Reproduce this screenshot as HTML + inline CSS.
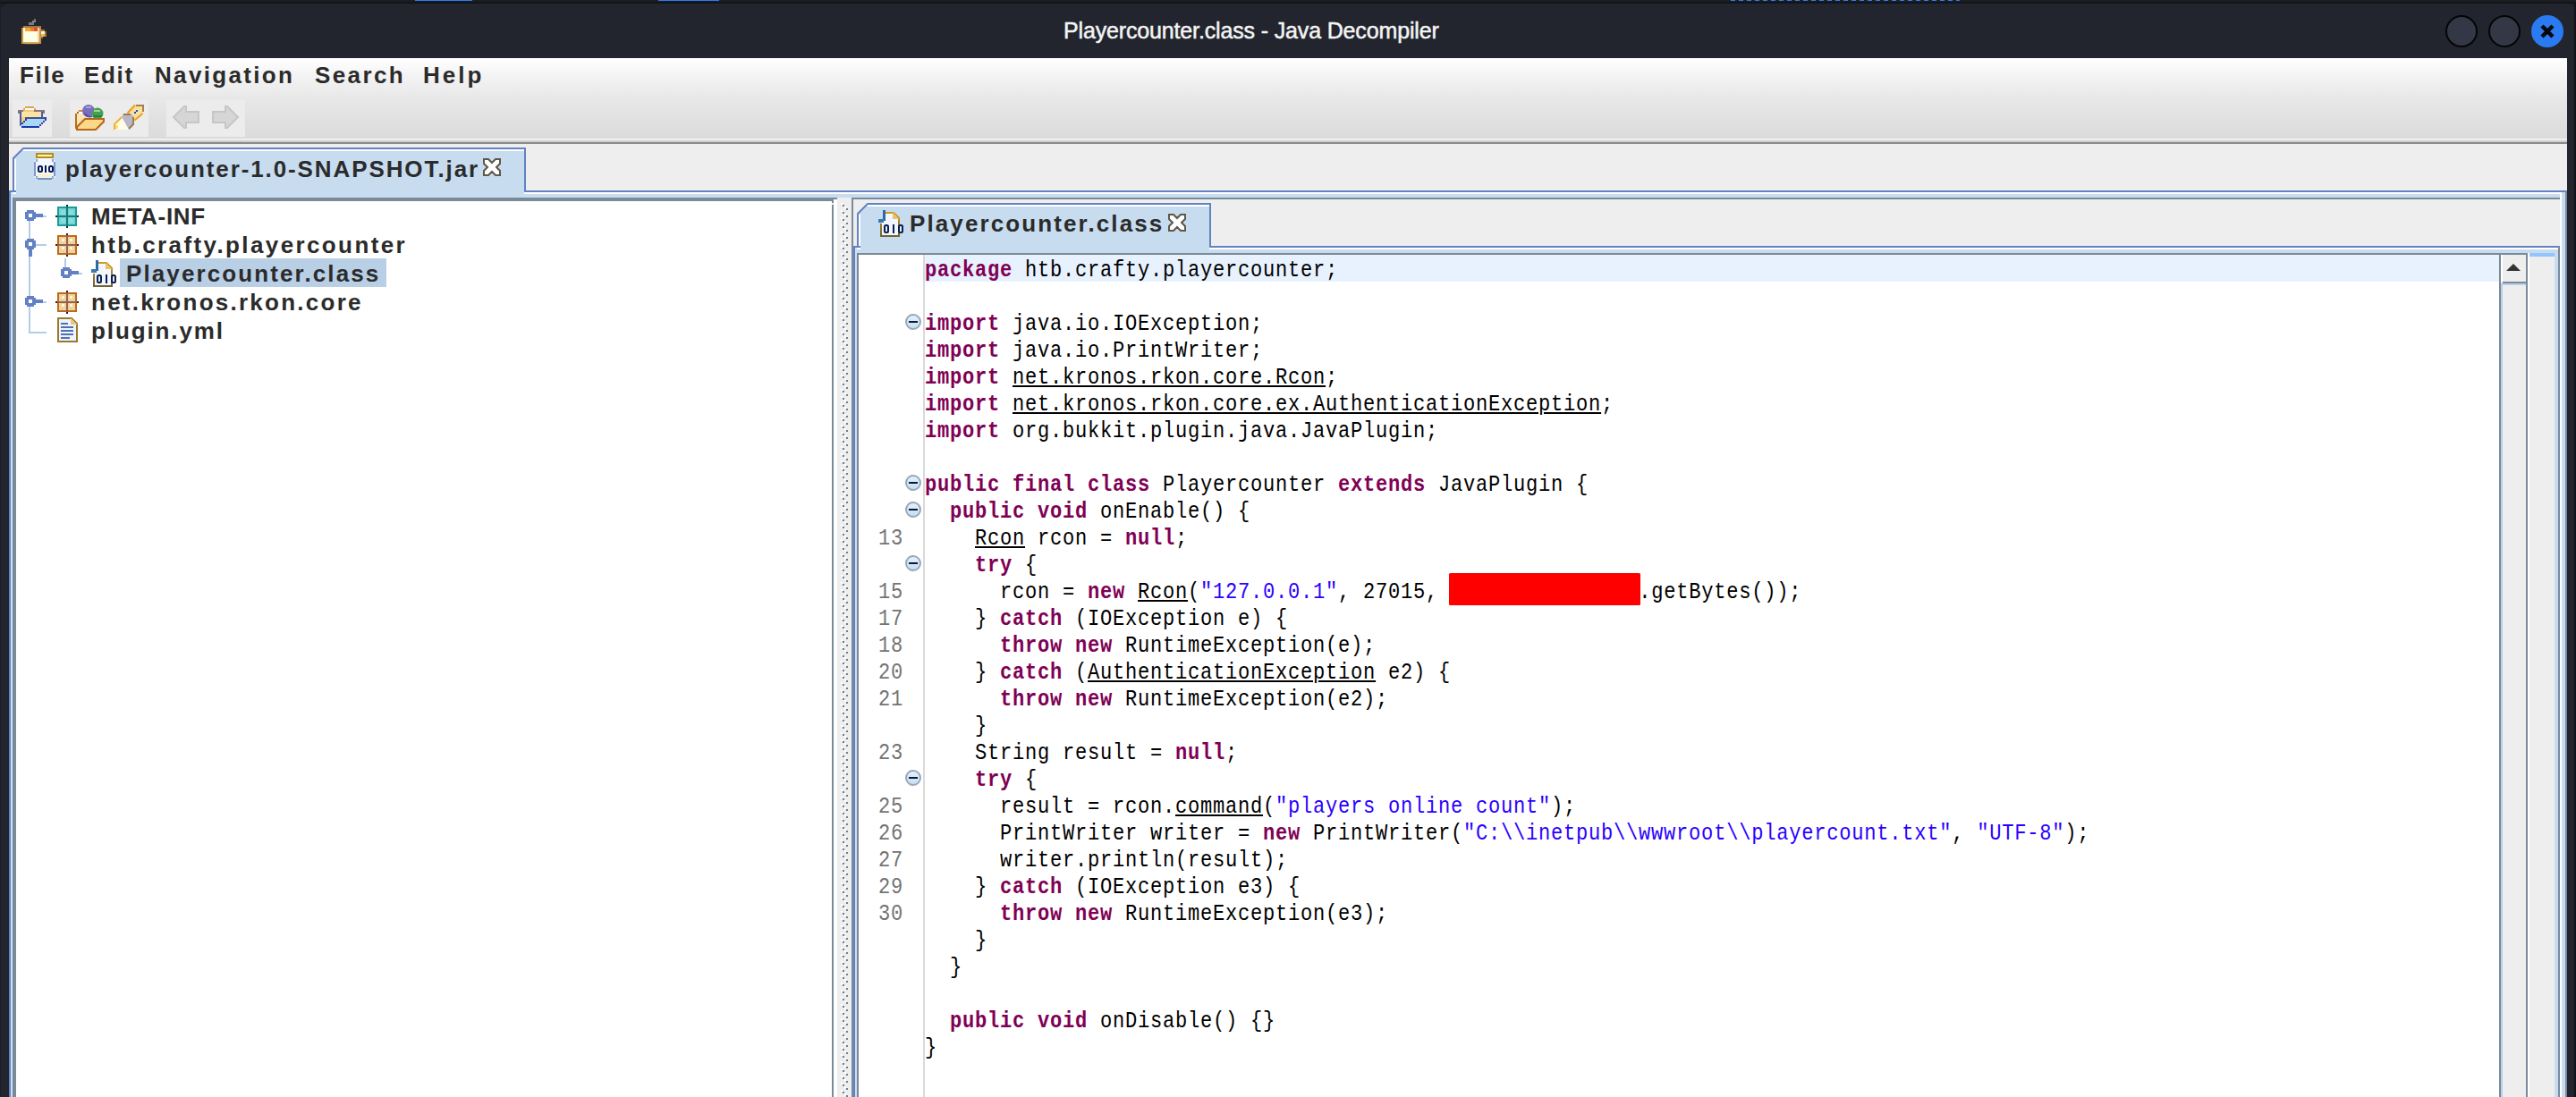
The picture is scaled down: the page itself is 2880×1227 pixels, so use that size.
<!DOCTYPE html>
<html><head><meta charset="utf-8">
<style>
*{margin:0;padding:0;box-sizing:border-box}
html,body{width:2880px;height:1227px;overflow:hidden;background:#1c1e24}
body{position:relative;font-family:"Liberation Sans",sans-serif}
.a{position:absolute}
#win{left:1px;top:4px;width:2879px;height:1223px;background:#22252e;border-radius:9px 9px 0 0}
#title{left:1189px;top:20px;font-size:25px;font-weight:normal;color:#f4f4f4;white-space:nowrap;letter-spacing:-0.15px;-webkit-text-stroke:0.5px #f4f4f4}
.wbtn{width:36px;height:36px;border-radius:50%;background:#343846;border:2px solid #050507;top:17px}
#menu{left:10px;top:65px;width:2860px;height:90px;background:linear-gradient(#ffffff 0px,#f3f3f3 20px,#e8e8e8 45px,#e0e0e0 70px,#dbdbdb 90px)}
.mi{top:69px;font-size:26px;font-weight:bold;color:#2b2b2b;white-space:nowrap}
.tb{top:112px;height:41px;background:#ececec}
#sep1{left:10px;top:155px;width:2860px;height:2px;background:#f0f0f0;border-bottom:0}
#sep1b{left:10px;top:157px;width:2860px;height:2px;background:#cecece}
#sep2{left:10px;top:159px;width:2860px;height:2px;background:#8a8a8a}
#body{left:10px;top:161px;width:2860px;height:1066px;background:#eeeeee}
.code{font-family:"Liberation Mono",monospace;font-size:26px;letter-spacing:0.87px;white-space:pre;color:#000;transform:scaleX(0.85);transform-origin:0 0}
.k{color:#7f0055;font-weight:bold}
.s{color:#2a00ff}
.u{text-decoration:underline;text-underline-offset:2px;text-decoration-thickness:2px}
.tree{font-size:26px;font-weight:bold;color:#2b2b2b;white-space:nowrap}
.code,.ln{line-height:30px}
.fold{width:18px;height:18px;border-radius:50%;background:linear-gradient(#e2f2fc,#c4e0f2);border:2px solid #9aa8bc;box-sizing:border-box}
.fold:after{content:"";position:absolute;left:2px;top:6px;width:10px;height:2px;background:#121630}
.ln{color:#747474;font-family:"Liberation Mono",monospace;font-size:26px;letter-spacing:0.87px;white-space:pre;text-align:right;transform:scaleX(0.85);transform-origin:100% 0}
</style></head><body>
<!-- top strip artifacts -->
<div class="a" style="left:0;top:2px;width:2880px;height:2px;background:#131418"></div>
<div class="a" style="left:464px;top:0;width:64px;height:1px;background:#2d7cf0"></div>
<div class="a" style="left:736px;top:0;width:68px;height:1px;background:#2d7cf0"></div>
<div class="a" style="left:1935px;top:0;width:256px;height:1px;background:repeating-linear-gradient(90deg,#2d7cf0 0 5px,transparent 5px 9px)"></div>
<div id="win" class="a"></div>
<div class="a" style="left:2878px;top:4px;width:2px;height:1223px;background:#111317"></div>
<div id="title" class="a">Playercounter.class - Java Decompiler</div>
<div class="a wbtn" style="left:2734px"></div>
<div class="a wbtn" style="left:2782px"></div>
<div class="a wbtn" style="left:2830px;background:#2a7bf2;border-color:#2a7bf2"></div>

<div id="menu" class="a"></div>
<div class="a mi" style="left:22px;letter-spacing:1.67px">File</div>
<div class="a mi" style="left:94px;letter-spacing:1.67px">Edit</div>
<div class="a mi" style="left:173px;letter-spacing:2.33px">Navigation</div>
<div class="a mi" style="left:352px;letter-spacing:2.4px">Search</div>
<div class="a mi" style="left:473px;letter-spacing:3.0px">Help</div>
<div class="a tb" style="left:14px;width:44px"></div>
<div class="a tb" style="left:78px;width:88px"></div>
<div class="a tb" style="left:186px;width:88px"></div>
<div id="sep1" class="a"></div>
<div id="sep1b" class="a"></div>
<div id="sep2" class="a"></div>
<div id="body" class="a"></div>

<svg class="a" style="left:0;top:0" width="2880" height="1227" shape-rendering="crispEdges">
 <!-- outer tab -->
 <polygon points="16,177 26,167 586,167 586,217 16,217" fill="#c8dcf0"/>
 <path d="M15,213 V177 L26,166 H587 V213" fill="none" stroke="#6282c2" stroke-width="2" shape-rendering="auto"/>
 <rect x="26" y="167" width="560" height="2" fill="#ffffff"/>
 <rect x="16" y="178" width="2" height="35" fill="#ffffff"/>
 <!-- outer frame -->
 <rect x="10" y="213" width="8" height="2" fill="#6282c2"/>
 <rect x="586" y="213" width="2284" height="2" fill="#6282c2"/>
 <rect x="12" y="215" width="6" height="2" fill="#ffffff"/>
 <rect x="586" y="215" width="2278" height="2" fill="#ffffff"/>
 <rect x="12" y="217" width="2856" height="4" fill="#c8dcf0"/>
 <rect x="10" y="213" width="2" height="1014" fill="#6282c2"/>
 <rect x="12" y="215" width="2" height="1012" fill="#cce0f6"/>
 <rect x="2862" y="215" width="2" height="1012" fill="#ffffff"/>
 <rect x="2864" y="215" width="4" height="1012" fill="#c8dcf0"/>
 <rect x="2868" y="213" width="2" height="1014" fill="#7a8a99"/>
 <!-- tree pane -->
 <rect x="14" y="221" width="916" height="4" fill="#7a8a99"/><rect x="930" y="221" width="6" height="2" fill="#7a8a99"/><rect x="932" y="223" width="4" height="2" fill="#ffffff"/><rect x="930" y="223" width="2" height="4" fill="#7a8a99"/>
 <rect x="14" y="221" width="4" height="1006" fill="#7a8a99"/>
 <rect x="18" y="225" width="912" height="1002" fill="#ffffff"/>
 <rect x="930" y="229" width="2" height="998" fill="#7a8a99"/>
 <rect x="932" y="225" width="4" height="1002" fill="#ffffff"/>
 <!-- splitter -->
 <rect x="936" y="221" width="16" height="1006" fill="#eeeeee"/>
 <rect x="942" y="229" width="2" height="2" fill="#6e7f8f"/><rect x="940" y="227" width="2" height="2" fill="#ffffff"/><rect x="946" y="233" width="2" height="2" fill="#6e7f8f"/><rect x="944" y="231" width="2" height="2" fill="#ffffff"/><rect x="942" y="237" width="2" height="2" fill="#6e7f8f"/><rect x="940" y="235" width="2" height="2" fill="#ffffff"/><rect x="946" y="241" width="2" height="2" fill="#6e7f8f"/><rect x="944" y="239" width="2" height="2" fill="#ffffff"/><rect x="942" y="245" width="2" height="2" fill="#6e7f8f"/><rect x="940" y="243" width="2" height="2" fill="#ffffff"/><rect x="946" y="249" width="2" height="2" fill="#6e7f8f"/><rect x="944" y="247" width="2" height="2" fill="#ffffff"/><rect x="942" y="253" width="2" height="2" fill="#6e7f8f"/><rect x="940" y="251" width="2" height="2" fill="#ffffff"/><rect x="946" y="257" width="2" height="2" fill="#6e7f8f"/><rect x="944" y="255" width="2" height="2" fill="#ffffff"/><rect x="942" y="261" width="2" height="2" fill="#6e7f8f"/><rect x="940" y="259" width="2" height="2" fill="#ffffff"/><rect x="946" y="265" width="2" height="2" fill="#6e7f8f"/><rect x="944" y="263" width="2" height="2" fill="#ffffff"/><rect x="942" y="269" width="2" height="2" fill="#6e7f8f"/><rect x="940" y="267" width="2" height="2" fill="#ffffff"/><rect x="946" y="273" width="2" height="2" fill="#6e7f8f"/><rect x="944" y="271" width="2" height="2" fill="#ffffff"/><rect x="942" y="277" width="2" height="2" fill="#6e7f8f"/><rect x="940" y="275" width="2" height="2" fill="#ffffff"/><rect x="946" y="281" width="2" height="2" fill="#6e7f8f"/><rect x="944" y="279" width="2" height="2" fill="#ffffff"/><rect x="942" y="285" width="2" height="2" fill="#6e7f8f"/><rect x="940" y="283" width="2" height="2" fill="#ffffff"/><rect x="946" y="289" width="2" height="2" fill="#6e7f8f"/><rect x="944" y="287" width="2" height="2" fill="#ffffff"/><rect x="942" y="293" width="2" height="2" fill="#6e7f8f"/><rect x="940" y="291" width="2" height="2" fill="#ffffff"/><rect x="946" y="297" width="2" height="2" fill="#6e7f8f"/><rect x="944" y="295" width="2" height="2" fill="#ffffff"/><rect x="942" y="301" width="2" height="2" fill="#6e7f8f"/><rect x="940" y="299" width="2" height="2" fill="#ffffff"/><rect x="946" y="305" width="2" height="2" fill="#6e7f8f"/><rect x="944" y="303" width="2" height="2" fill="#ffffff"/><rect x="942" y="309" width="2" height="2" fill="#6e7f8f"/><rect x="940" y="307" width="2" height="2" fill="#ffffff"/><rect x="946" y="313" width="2" height="2" fill="#6e7f8f"/><rect x="944" y="311" width="2" height="2" fill="#ffffff"/><rect x="942" y="317" width="2" height="2" fill="#6e7f8f"/><rect x="940" y="315" width="2" height="2" fill="#ffffff"/><rect x="946" y="321" width="2" height="2" fill="#6e7f8f"/><rect x="944" y="319" width="2" height="2" fill="#ffffff"/><rect x="942" y="325" width="2" height="2" fill="#6e7f8f"/><rect x="940" y="323" width="2" height="2" fill="#ffffff"/><rect x="946" y="329" width="2" height="2" fill="#6e7f8f"/><rect x="944" y="327" width="2" height="2" fill="#ffffff"/><rect x="942" y="333" width="2" height="2" fill="#6e7f8f"/><rect x="940" y="331" width="2" height="2" fill="#ffffff"/><rect x="946" y="337" width="2" height="2" fill="#6e7f8f"/><rect x="944" y="335" width="2" height="2" fill="#ffffff"/><rect x="942" y="341" width="2" height="2" fill="#6e7f8f"/><rect x="940" y="339" width="2" height="2" fill="#ffffff"/><rect x="946" y="345" width="2" height="2" fill="#6e7f8f"/><rect x="944" y="343" width="2" height="2" fill="#ffffff"/><rect x="942" y="349" width="2" height="2" fill="#6e7f8f"/><rect x="940" y="347" width="2" height="2" fill="#ffffff"/><rect x="946" y="353" width="2" height="2" fill="#6e7f8f"/><rect x="944" y="351" width="2" height="2" fill="#ffffff"/><rect x="942" y="357" width="2" height="2" fill="#6e7f8f"/><rect x="940" y="355" width="2" height="2" fill="#ffffff"/><rect x="946" y="361" width="2" height="2" fill="#6e7f8f"/><rect x="944" y="359" width="2" height="2" fill="#ffffff"/><rect x="942" y="365" width="2" height="2" fill="#6e7f8f"/><rect x="940" y="363" width="2" height="2" fill="#ffffff"/><rect x="946" y="369" width="2" height="2" fill="#6e7f8f"/><rect x="944" y="367" width="2" height="2" fill="#ffffff"/><rect x="942" y="373" width="2" height="2" fill="#6e7f8f"/><rect x="940" y="371" width="2" height="2" fill="#ffffff"/><rect x="946" y="377" width="2" height="2" fill="#6e7f8f"/><rect x="944" y="375" width="2" height="2" fill="#ffffff"/><rect x="942" y="381" width="2" height="2" fill="#6e7f8f"/><rect x="940" y="379" width="2" height="2" fill="#ffffff"/><rect x="946" y="385" width="2" height="2" fill="#6e7f8f"/><rect x="944" y="383" width="2" height="2" fill="#ffffff"/><rect x="942" y="389" width="2" height="2" fill="#6e7f8f"/><rect x="940" y="387" width="2" height="2" fill="#ffffff"/><rect x="946" y="393" width="2" height="2" fill="#6e7f8f"/><rect x="944" y="391" width="2" height="2" fill="#ffffff"/><rect x="942" y="397" width="2" height="2" fill="#6e7f8f"/><rect x="940" y="395" width="2" height="2" fill="#ffffff"/><rect x="946" y="401" width="2" height="2" fill="#6e7f8f"/><rect x="944" y="399" width="2" height="2" fill="#ffffff"/><rect x="942" y="405" width="2" height="2" fill="#6e7f8f"/><rect x="940" y="403" width="2" height="2" fill="#ffffff"/><rect x="946" y="409" width="2" height="2" fill="#6e7f8f"/><rect x="944" y="407" width="2" height="2" fill="#ffffff"/><rect x="942" y="413" width="2" height="2" fill="#6e7f8f"/><rect x="940" y="411" width="2" height="2" fill="#ffffff"/><rect x="946" y="417" width="2" height="2" fill="#6e7f8f"/><rect x="944" y="415" width="2" height="2" fill="#ffffff"/><rect x="942" y="421" width="2" height="2" fill="#6e7f8f"/><rect x="940" y="419" width="2" height="2" fill="#ffffff"/><rect x="946" y="425" width="2" height="2" fill="#6e7f8f"/><rect x="944" y="423" width="2" height="2" fill="#ffffff"/><rect x="942" y="429" width="2" height="2" fill="#6e7f8f"/><rect x="940" y="427" width="2" height="2" fill="#ffffff"/><rect x="946" y="433" width="2" height="2" fill="#6e7f8f"/><rect x="944" y="431" width="2" height="2" fill="#ffffff"/><rect x="942" y="437" width="2" height="2" fill="#6e7f8f"/><rect x="940" y="435" width="2" height="2" fill="#ffffff"/><rect x="946" y="441" width="2" height="2" fill="#6e7f8f"/><rect x="944" y="439" width="2" height="2" fill="#ffffff"/><rect x="942" y="445" width="2" height="2" fill="#6e7f8f"/><rect x="940" y="443" width="2" height="2" fill="#ffffff"/><rect x="946" y="449" width="2" height="2" fill="#6e7f8f"/><rect x="944" y="447" width="2" height="2" fill="#ffffff"/><rect x="942" y="453" width="2" height="2" fill="#6e7f8f"/><rect x="940" y="451" width="2" height="2" fill="#ffffff"/><rect x="946" y="457" width="2" height="2" fill="#6e7f8f"/><rect x="944" y="455" width="2" height="2" fill="#ffffff"/><rect x="942" y="461" width="2" height="2" fill="#6e7f8f"/><rect x="940" y="459" width="2" height="2" fill="#ffffff"/><rect x="946" y="465" width="2" height="2" fill="#6e7f8f"/><rect x="944" y="463" width="2" height="2" fill="#ffffff"/><rect x="942" y="469" width="2" height="2" fill="#6e7f8f"/><rect x="940" y="467" width="2" height="2" fill="#ffffff"/><rect x="946" y="473" width="2" height="2" fill="#6e7f8f"/><rect x="944" y="471" width="2" height="2" fill="#ffffff"/><rect x="942" y="477" width="2" height="2" fill="#6e7f8f"/><rect x="940" y="475" width="2" height="2" fill="#ffffff"/><rect x="946" y="481" width="2" height="2" fill="#6e7f8f"/><rect x="944" y="479" width="2" height="2" fill="#ffffff"/><rect x="942" y="485" width="2" height="2" fill="#6e7f8f"/><rect x="940" y="483" width="2" height="2" fill="#ffffff"/><rect x="946" y="489" width="2" height="2" fill="#6e7f8f"/><rect x="944" y="487" width="2" height="2" fill="#ffffff"/><rect x="942" y="493" width="2" height="2" fill="#6e7f8f"/><rect x="940" y="491" width="2" height="2" fill="#ffffff"/><rect x="946" y="497" width="2" height="2" fill="#6e7f8f"/><rect x="944" y="495" width="2" height="2" fill="#ffffff"/><rect x="942" y="501" width="2" height="2" fill="#6e7f8f"/><rect x="940" y="499" width="2" height="2" fill="#ffffff"/><rect x="946" y="505" width="2" height="2" fill="#6e7f8f"/><rect x="944" y="503" width="2" height="2" fill="#ffffff"/><rect x="942" y="509" width="2" height="2" fill="#6e7f8f"/><rect x="940" y="507" width="2" height="2" fill="#ffffff"/><rect x="946" y="513" width="2" height="2" fill="#6e7f8f"/><rect x="944" y="511" width="2" height="2" fill="#ffffff"/><rect x="942" y="517" width="2" height="2" fill="#6e7f8f"/><rect x="940" y="515" width="2" height="2" fill="#ffffff"/><rect x="946" y="521" width="2" height="2" fill="#6e7f8f"/><rect x="944" y="519" width="2" height="2" fill="#ffffff"/><rect x="942" y="525" width="2" height="2" fill="#6e7f8f"/><rect x="940" y="523" width="2" height="2" fill="#ffffff"/><rect x="946" y="529" width="2" height="2" fill="#6e7f8f"/><rect x="944" y="527" width="2" height="2" fill="#ffffff"/><rect x="942" y="533" width="2" height="2" fill="#6e7f8f"/><rect x="940" y="531" width="2" height="2" fill="#ffffff"/><rect x="946" y="537" width="2" height="2" fill="#6e7f8f"/><rect x="944" y="535" width="2" height="2" fill="#ffffff"/><rect x="942" y="541" width="2" height="2" fill="#6e7f8f"/><rect x="940" y="539" width="2" height="2" fill="#ffffff"/><rect x="946" y="545" width="2" height="2" fill="#6e7f8f"/><rect x="944" y="543" width="2" height="2" fill="#ffffff"/><rect x="942" y="549" width="2" height="2" fill="#6e7f8f"/><rect x="940" y="547" width="2" height="2" fill="#ffffff"/><rect x="946" y="553" width="2" height="2" fill="#6e7f8f"/><rect x="944" y="551" width="2" height="2" fill="#ffffff"/><rect x="942" y="557" width="2" height="2" fill="#6e7f8f"/><rect x="940" y="555" width="2" height="2" fill="#ffffff"/><rect x="946" y="561" width="2" height="2" fill="#6e7f8f"/><rect x="944" y="559" width="2" height="2" fill="#ffffff"/><rect x="942" y="565" width="2" height="2" fill="#6e7f8f"/><rect x="940" y="563" width="2" height="2" fill="#ffffff"/><rect x="946" y="569" width="2" height="2" fill="#6e7f8f"/><rect x="944" y="567" width="2" height="2" fill="#ffffff"/><rect x="942" y="573" width="2" height="2" fill="#6e7f8f"/><rect x="940" y="571" width="2" height="2" fill="#ffffff"/><rect x="946" y="577" width="2" height="2" fill="#6e7f8f"/><rect x="944" y="575" width="2" height="2" fill="#ffffff"/><rect x="942" y="581" width="2" height="2" fill="#6e7f8f"/><rect x="940" y="579" width="2" height="2" fill="#ffffff"/><rect x="946" y="585" width="2" height="2" fill="#6e7f8f"/><rect x="944" y="583" width="2" height="2" fill="#ffffff"/><rect x="942" y="589" width="2" height="2" fill="#6e7f8f"/><rect x="940" y="587" width="2" height="2" fill="#ffffff"/><rect x="946" y="593" width="2" height="2" fill="#6e7f8f"/><rect x="944" y="591" width="2" height="2" fill="#ffffff"/><rect x="942" y="597" width="2" height="2" fill="#6e7f8f"/><rect x="940" y="595" width="2" height="2" fill="#ffffff"/><rect x="946" y="601" width="2" height="2" fill="#6e7f8f"/><rect x="944" y="599" width="2" height="2" fill="#ffffff"/><rect x="942" y="605" width="2" height="2" fill="#6e7f8f"/><rect x="940" y="603" width="2" height="2" fill="#ffffff"/><rect x="946" y="609" width="2" height="2" fill="#6e7f8f"/><rect x="944" y="607" width="2" height="2" fill="#ffffff"/><rect x="942" y="613" width="2" height="2" fill="#6e7f8f"/><rect x="940" y="611" width="2" height="2" fill="#ffffff"/><rect x="946" y="617" width="2" height="2" fill="#6e7f8f"/><rect x="944" y="615" width="2" height="2" fill="#ffffff"/><rect x="942" y="621" width="2" height="2" fill="#6e7f8f"/><rect x="940" y="619" width="2" height="2" fill="#ffffff"/><rect x="946" y="625" width="2" height="2" fill="#6e7f8f"/><rect x="944" y="623" width="2" height="2" fill="#ffffff"/><rect x="942" y="629" width="2" height="2" fill="#6e7f8f"/><rect x="940" y="627" width="2" height="2" fill="#ffffff"/><rect x="946" y="633" width="2" height="2" fill="#6e7f8f"/><rect x="944" y="631" width="2" height="2" fill="#ffffff"/><rect x="942" y="637" width="2" height="2" fill="#6e7f8f"/><rect x="940" y="635" width="2" height="2" fill="#ffffff"/><rect x="946" y="641" width="2" height="2" fill="#6e7f8f"/><rect x="944" y="639" width="2" height="2" fill="#ffffff"/><rect x="942" y="645" width="2" height="2" fill="#6e7f8f"/><rect x="940" y="643" width="2" height="2" fill="#ffffff"/><rect x="946" y="649" width="2" height="2" fill="#6e7f8f"/><rect x="944" y="647" width="2" height="2" fill="#ffffff"/><rect x="942" y="653" width="2" height="2" fill="#6e7f8f"/><rect x="940" y="651" width="2" height="2" fill="#ffffff"/><rect x="946" y="657" width="2" height="2" fill="#6e7f8f"/><rect x="944" y="655" width="2" height="2" fill="#ffffff"/><rect x="942" y="661" width="2" height="2" fill="#6e7f8f"/><rect x="940" y="659" width="2" height="2" fill="#ffffff"/><rect x="946" y="665" width="2" height="2" fill="#6e7f8f"/><rect x="944" y="663" width="2" height="2" fill="#ffffff"/><rect x="942" y="669" width="2" height="2" fill="#6e7f8f"/><rect x="940" y="667" width="2" height="2" fill="#ffffff"/><rect x="946" y="673" width="2" height="2" fill="#6e7f8f"/><rect x="944" y="671" width="2" height="2" fill="#ffffff"/><rect x="942" y="677" width="2" height="2" fill="#6e7f8f"/><rect x="940" y="675" width="2" height="2" fill="#ffffff"/><rect x="946" y="681" width="2" height="2" fill="#6e7f8f"/><rect x="944" y="679" width="2" height="2" fill="#ffffff"/><rect x="942" y="685" width="2" height="2" fill="#6e7f8f"/><rect x="940" y="683" width="2" height="2" fill="#ffffff"/><rect x="946" y="689" width="2" height="2" fill="#6e7f8f"/><rect x="944" y="687" width="2" height="2" fill="#ffffff"/><rect x="942" y="693" width="2" height="2" fill="#6e7f8f"/><rect x="940" y="691" width="2" height="2" fill="#ffffff"/><rect x="946" y="697" width="2" height="2" fill="#6e7f8f"/><rect x="944" y="695" width="2" height="2" fill="#ffffff"/><rect x="942" y="701" width="2" height="2" fill="#6e7f8f"/><rect x="940" y="699" width="2" height="2" fill="#ffffff"/><rect x="946" y="705" width="2" height="2" fill="#6e7f8f"/><rect x="944" y="703" width="2" height="2" fill="#ffffff"/><rect x="942" y="709" width="2" height="2" fill="#6e7f8f"/><rect x="940" y="707" width="2" height="2" fill="#ffffff"/><rect x="946" y="713" width="2" height="2" fill="#6e7f8f"/><rect x="944" y="711" width="2" height="2" fill="#ffffff"/><rect x="942" y="717" width="2" height="2" fill="#6e7f8f"/><rect x="940" y="715" width="2" height="2" fill="#ffffff"/><rect x="946" y="721" width="2" height="2" fill="#6e7f8f"/><rect x="944" y="719" width="2" height="2" fill="#ffffff"/><rect x="942" y="725" width="2" height="2" fill="#6e7f8f"/><rect x="940" y="723" width="2" height="2" fill="#ffffff"/><rect x="946" y="729" width="2" height="2" fill="#6e7f8f"/><rect x="944" y="727" width="2" height="2" fill="#ffffff"/><rect x="942" y="733" width="2" height="2" fill="#6e7f8f"/><rect x="940" y="731" width="2" height="2" fill="#ffffff"/><rect x="946" y="737" width="2" height="2" fill="#6e7f8f"/><rect x="944" y="735" width="2" height="2" fill="#ffffff"/><rect x="942" y="741" width="2" height="2" fill="#6e7f8f"/><rect x="940" y="739" width="2" height="2" fill="#ffffff"/><rect x="946" y="745" width="2" height="2" fill="#6e7f8f"/><rect x="944" y="743" width="2" height="2" fill="#ffffff"/><rect x="942" y="749" width="2" height="2" fill="#6e7f8f"/><rect x="940" y="747" width="2" height="2" fill="#ffffff"/><rect x="946" y="753" width="2" height="2" fill="#6e7f8f"/><rect x="944" y="751" width="2" height="2" fill="#ffffff"/><rect x="942" y="757" width="2" height="2" fill="#6e7f8f"/><rect x="940" y="755" width="2" height="2" fill="#ffffff"/><rect x="946" y="761" width="2" height="2" fill="#6e7f8f"/><rect x="944" y="759" width="2" height="2" fill="#ffffff"/><rect x="942" y="765" width="2" height="2" fill="#6e7f8f"/><rect x="940" y="763" width="2" height="2" fill="#ffffff"/><rect x="946" y="769" width="2" height="2" fill="#6e7f8f"/><rect x="944" y="767" width="2" height="2" fill="#ffffff"/><rect x="942" y="773" width="2" height="2" fill="#6e7f8f"/><rect x="940" y="771" width="2" height="2" fill="#ffffff"/><rect x="946" y="777" width="2" height="2" fill="#6e7f8f"/><rect x="944" y="775" width="2" height="2" fill="#ffffff"/><rect x="942" y="781" width="2" height="2" fill="#6e7f8f"/><rect x="940" y="779" width="2" height="2" fill="#ffffff"/><rect x="946" y="785" width="2" height="2" fill="#6e7f8f"/><rect x="944" y="783" width="2" height="2" fill="#ffffff"/><rect x="942" y="789" width="2" height="2" fill="#6e7f8f"/><rect x="940" y="787" width="2" height="2" fill="#ffffff"/><rect x="946" y="793" width="2" height="2" fill="#6e7f8f"/><rect x="944" y="791" width="2" height="2" fill="#ffffff"/><rect x="942" y="797" width="2" height="2" fill="#6e7f8f"/><rect x="940" y="795" width="2" height="2" fill="#ffffff"/><rect x="946" y="801" width="2" height="2" fill="#6e7f8f"/><rect x="944" y="799" width="2" height="2" fill="#ffffff"/><rect x="942" y="805" width="2" height="2" fill="#6e7f8f"/><rect x="940" y="803" width="2" height="2" fill="#ffffff"/><rect x="946" y="809" width="2" height="2" fill="#6e7f8f"/><rect x="944" y="807" width="2" height="2" fill="#ffffff"/><rect x="942" y="813" width="2" height="2" fill="#6e7f8f"/><rect x="940" y="811" width="2" height="2" fill="#ffffff"/><rect x="946" y="817" width="2" height="2" fill="#6e7f8f"/><rect x="944" y="815" width="2" height="2" fill="#ffffff"/><rect x="942" y="821" width="2" height="2" fill="#6e7f8f"/><rect x="940" y="819" width="2" height="2" fill="#ffffff"/><rect x="946" y="825" width="2" height="2" fill="#6e7f8f"/><rect x="944" y="823" width="2" height="2" fill="#ffffff"/><rect x="942" y="829" width="2" height="2" fill="#6e7f8f"/><rect x="940" y="827" width="2" height="2" fill="#ffffff"/><rect x="946" y="833" width="2" height="2" fill="#6e7f8f"/><rect x="944" y="831" width="2" height="2" fill="#ffffff"/><rect x="942" y="837" width="2" height="2" fill="#6e7f8f"/><rect x="940" y="835" width="2" height="2" fill="#ffffff"/><rect x="946" y="841" width="2" height="2" fill="#6e7f8f"/><rect x="944" y="839" width="2" height="2" fill="#ffffff"/><rect x="942" y="845" width="2" height="2" fill="#6e7f8f"/><rect x="940" y="843" width="2" height="2" fill="#ffffff"/><rect x="946" y="849" width="2" height="2" fill="#6e7f8f"/><rect x="944" y="847" width="2" height="2" fill="#ffffff"/><rect x="942" y="853" width="2" height="2" fill="#6e7f8f"/><rect x="940" y="851" width="2" height="2" fill="#ffffff"/><rect x="946" y="857" width="2" height="2" fill="#6e7f8f"/><rect x="944" y="855" width="2" height="2" fill="#ffffff"/><rect x="942" y="861" width="2" height="2" fill="#6e7f8f"/><rect x="940" y="859" width="2" height="2" fill="#ffffff"/><rect x="946" y="865" width="2" height="2" fill="#6e7f8f"/><rect x="944" y="863" width="2" height="2" fill="#ffffff"/><rect x="942" y="869" width="2" height="2" fill="#6e7f8f"/><rect x="940" y="867" width="2" height="2" fill="#ffffff"/><rect x="946" y="873" width="2" height="2" fill="#6e7f8f"/><rect x="944" y="871" width="2" height="2" fill="#ffffff"/><rect x="942" y="877" width="2" height="2" fill="#6e7f8f"/><rect x="940" y="875" width="2" height="2" fill="#ffffff"/><rect x="946" y="881" width="2" height="2" fill="#6e7f8f"/><rect x="944" y="879" width="2" height="2" fill="#ffffff"/><rect x="942" y="885" width="2" height="2" fill="#6e7f8f"/><rect x="940" y="883" width="2" height="2" fill="#ffffff"/><rect x="946" y="889" width="2" height="2" fill="#6e7f8f"/><rect x="944" y="887" width="2" height="2" fill="#ffffff"/><rect x="942" y="893" width="2" height="2" fill="#6e7f8f"/><rect x="940" y="891" width="2" height="2" fill="#ffffff"/><rect x="946" y="897" width="2" height="2" fill="#6e7f8f"/><rect x="944" y="895" width="2" height="2" fill="#ffffff"/><rect x="942" y="901" width="2" height="2" fill="#6e7f8f"/><rect x="940" y="899" width="2" height="2" fill="#ffffff"/><rect x="946" y="905" width="2" height="2" fill="#6e7f8f"/><rect x="944" y="903" width="2" height="2" fill="#ffffff"/><rect x="942" y="909" width="2" height="2" fill="#6e7f8f"/><rect x="940" y="907" width="2" height="2" fill="#ffffff"/><rect x="946" y="913" width="2" height="2" fill="#6e7f8f"/><rect x="944" y="911" width="2" height="2" fill="#ffffff"/><rect x="942" y="917" width="2" height="2" fill="#6e7f8f"/><rect x="940" y="915" width="2" height="2" fill="#ffffff"/><rect x="946" y="921" width="2" height="2" fill="#6e7f8f"/><rect x="944" y="919" width="2" height="2" fill="#ffffff"/><rect x="942" y="925" width="2" height="2" fill="#6e7f8f"/><rect x="940" y="923" width="2" height="2" fill="#ffffff"/><rect x="946" y="929" width="2" height="2" fill="#6e7f8f"/><rect x="944" y="927" width="2" height="2" fill="#ffffff"/><rect x="942" y="933" width="2" height="2" fill="#6e7f8f"/><rect x="940" y="931" width="2" height="2" fill="#ffffff"/><rect x="946" y="937" width="2" height="2" fill="#6e7f8f"/><rect x="944" y="935" width="2" height="2" fill="#ffffff"/><rect x="942" y="941" width="2" height="2" fill="#6e7f8f"/><rect x="940" y="939" width="2" height="2" fill="#ffffff"/><rect x="946" y="945" width="2" height="2" fill="#6e7f8f"/><rect x="944" y="943" width="2" height="2" fill="#ffffff"/><rect x="942" y="949" width="2" height="2" fill="#6e7f8f"/><rect x="940" y="947" width="2" height="2" fill="#ffffff"/><rect x="946" y="953" width="2" height="2" fill="#6e7f8f"/><rect x="944" y="951" width="2" height="2" fill="#ffffff"/><rect x="942" y="957" width="2" height="2" fill="#6e7f8f"/><rect x="940" y="955" width="2" height="2" fill="#ffffff"/><rect x="946" y="961" width="2" height="2" fill="#6e7f8f"/><rect x="944" y="959" width="2" height="2" fill="#ffffff"/><rect x="942" y="965" width="2" height="2" fill="#6e7f8f"/><rect x="940" y="963" width="2" height="2" fill="#ffffff"/><rect x="946" y="969" width="2" height="2" fill="#6e7f8f"/><rect x="944" y="967" width="2" height="2" fill="#ffffff"/><rect x="942" y="973" width="2" height="2" fill="#6e7f8f"/><rect x="940" y="971" width="2" height="2" fill="#ffffff"/><rect x="946" y="977" width="2" height="2" fill="#6e7f8f"/><rect x="944" y="975" width="2" height="2" fill="#ffffff"/><rect x="942" y="981" width="2" height="2" fill="#6e7f8f"/><rect x="940" y="979" width="2" height="2" fill="#ffffff"/><rect x="946" y="985" width="2" height="2" fill="#6e7f8f"/><rect x="944" y="983" width="2" height="2" fill="#ffffff"/><rect x="942" y="989" width="2" height="2" fill="#6e7f8f"/><rect x="940" y="987" width="2" height="2" fill="#ffffff"/><rect x="946" y="993" width="2" height="2" fill="#6e7f8f"/><rect x="944" y="991" width="2" height="2" fill="#ffffff"/><rect x="942" y="997" width="2" height="2" fill="#6e7f8f"/><rect x="940" y="995" width="2" height="2" fill="#ffffff"/><rect x="946" y="1001" width="2" height="2" fill="#6e7f8f"/><rect x="944" y="999" width="2" height="2" fill="#ffffff"/><rect x="942" y="1005" width="2" height="2" fill="#6e7f8f"/><rect x="940" y="1003" width="2" height="2" fill="#ffffff"/><rect x="946" y="1009" width="2" height="2" fill="#6e7f8f"/><rect x="944" y="1007" width="2" height="2" fill="#ffffff"/><rect x="942" y="1013" width="2" height="2" fill="#6e7f8f"/><rect x="940" y="1011" width="2" height="2" fill="#ffffff"/><rect x="946" y="1017" width="2" height="2" fill="#6e7f8f"/><rect x="944" y="1015" width="2" height="2" fill="#ffffff"/><rect x="942" y="1021" width="2" height="2" fill="#6e7f8f"/><rect x="940" y="1019" width="2" height="2" fill="#ffffff"/><rect x="946" y="1025" width="2" height="2" fill="#6e7f8f"/><rect x="944" y="1023" width="2" height="2" fill="#ffffff"/><rect x="942" y="1029" width="2" height="2" fill="#6e7f8f"/><rect x="940" y="1027" width="2" height="2" fill="#ffffff"/><rect x="946" y="1033" width="2" height="2" fill="#6e7f8f"/><rect x="944" y="1031" width="2" height="2" fill="#ffffff"/><rect x="942" y="1037" width="2" height="2" fill="#6e7f8f"/><rect x="940" y="1035" width="2" height="2" fill="#ffffff"/><rect x="946" y="1041" width="2" height="2" fill="#6e7f8f"/><rect x="944" y="1039" width="2" height="2" fill="#ffffff"/><rect x="942" y="1045" width="2" height="2" fill="#6e7f8f"/><rect x="940" y="1043" width="2" height="2" fill="#ffffff"/><rect x="946" y="1049" width="2" height="2" fill="#6e7f8f"/><rect x="944" y="1047" width="2" height="2" fill="#ffffff"/><rect x="942" y="1053" width="2" height="2" fill="#6e7f8f"/><rect x="940" y="1051" width="2" height="2" fill="#ffffff"/><rect x="946" y="1057" width="2" height="2" fill="#6e7f8f"/><rect x="944" y="1055" width="2" height="2" fill="#ffffff"/><rect x="942" y="1061" width="2" height="2" fill="#6e7f8f"/><rect x="940" y="1059" width="2" height="2" fill="#ffffff"/><rect x="946" y="1065" width="2" height="2" fill="#6e7f8f"/><rect x="944" y="1063" width="2" height="2" fill="#ffffff"/><rect x="942" y="1069" width="2" height="2" fill="#6e7f8f"/><rect x="940" y="1067" width="2" height="2" fill="#ffffff"/><rect x="946" y="1073" width="2" height="2" fill="#6e7f8f"/><rect x="944" y="1071" width="2" height="2" fill="#ffffff"/><rect x="942" y="1077" width="2" height="2" fill="#6e7f8f"/><rect x="940" y="1075" width="2" height="2" fill="#ffffff"/><rect x="946" y="1081" width="2" height="2" fill="#6e7f8f"/><rect x="944" y="1079" width="2" height="2" fill="#ffffff"/><rect x="942" y="1085" width="2" height="2" fill="#6e7f8f"/><rect x="940" y="1083" width="2" height="2" fill="#ffffff"/><rect x="946" y="1089" width="2" height="2" fill="#6e7f8f"/><rect x="944" y="1087" width="2" height="2" fill="#ffffff"/><rect x="942" y="1093" width="2" height="2" fill="#6e7f8f"/><rect x="940" y="1091" width="2" height="2" fill="#ffffff"/><rect x="946" y="1097" width="2" height="2" fill="#6e7f8f"/><rect x="944" y="1095" width="2" height="2" fill="#ffffff"/><rect x="942" y="1101" width="2" height="2" fill="#6e7f8f"/><rect x="940" y="1099" width="2" height="2" fill="#ffffff"/><rect x="946" y="1105" width="2" height="2" fill="#6e7f8f"/><rect x="944" y="1103" width="2" height="2" fill="#ffffff"/><rect x="942" y="1109" width="2" height="2" fill="#6e7f8f"/><rect x="940" y="1107" width="2" height="2" fill="#ffffff"/><rect x="946" y="1113" width="2" height="2" fill="#6e7f8f"/><rect x="944" y="1111" width="2" height="2" fill="#ffffff"/><rect x="942" y="1117" width="2" height="2" fill="#6e7f8f"/><rect x="940" y="1115" width="2" height="2" fill="#ffffff"/><rect x="946" y="1121" width="2" height="2" fill="#6e7f8f"/><rect x="944" y="1119" width="2" height="2" fill="#ffffff"/><rect x="942" y="1125" width="2" height="2" fill="#6e7f8f"/><rect x="940" y="1123" width="2" height="2" fill="#ffffff"/><rect x="946" y="1129" width="2" height="2" fill="#6e7f8f"/><rect x="944" y="1127" width="2" height="2" fill="#ffffff"/><rect x="942" y="1133" width="2" height="2" fill="#6e7f8f"/><rect x="940" y="1131" width="2" height="2" fill="#ffffff"/><rect x="946" y="1137" width="2" height="2" fill="#6e7f8f"/><rect x="944" y="1135" width="2" height="2" fill="#ffffff"/><rect x="942" y="1141" width="2" height="2" fill="#6e7f8f"/><rect x="940" y="1139" width="2" height="2" fill="#ffffff"/><rect x="946" y="1145" width="2" height="2" fill="#6e7f8f"/><rect x="944" y="1143" width="2" height="2" fill="#ffffff"/><rect x="942" y="1149" width="2" height="2" fill="#6e7f8f"/><rect x="940" y="1147" width="2" height="2" fill="#ffffff"/><rect x="946" y="1153" width="2" height="2" fill="#6e7f8f"/><rect x="944" y="1151" width="2" height="2" fill="#ffffff"/><rect x="942" y="1157" width="2" height="2" fill="#6e7f8f"/><rect x="940" y="1155" width="2" height="2" fill="#ffffff"/><rect x="946" y="1161" width="2" height="2" fill="#6e7f8f"/><rect x="944" y="1159" width="2" height="2" fill="#ffffff"/><rect x="942" y="1165" width="2" height="2" fill="#6e7f8f"/><rect x="940" y="1163" width="2" height="2" fill="#ffffff"/><rect x="946" y="1169" width="2" height="2" fill="#6e7f8f"/><rect x="944" y="1167" width="2" height="2" fill="#ffffff"/><rect x="942" y="1173" width="2" height="2" fill="#6e7f8f"/><rect x="940" y="1171" width="2" height="2" fill="#ffffff"/><rect x="946" y="1177" width="2" height="2" fill="#6e7f8f"/><rect x="944" y="1175" width="2" height="2" fill="#ffffff"/><rect x="942" y="1181" width="2" height="2" fill="#6e7f8f"/><rect x="940" y="1179" width="2" height="2" fill="#ffffff"/><rect x="946" y="1185" width="2" height="2" fill="#6e7f8f"/><rect x="944" y="1183" width="2" height="2" fill="#ffffff"/><rect x="942" y="1189" width="2" height="2" fill="#6e7f8f"/><rect x="940" y="1187" width="2" height="2" fill="#ffffff"/><rect x="946" y="1193" width="2" height="2" fill="#6e7f8f"/><rect x="944" y="1191" width="2" height="2" fill="#ffffff"/><rect x="942" y="1197" width="2" height="2" fill="#6e7f8f"/><rect x="940" y="1195" width="2" height="2" fill="#ffffff"/><rect x="946" y="1201" width="2" height="2" fill="#6e7f8f"/><rect x="944" y="1199" width="2" height="2" fill="#ffffff"/><rect x="942" y="1205" width="2" height="2" fill="#6e7f8f"/><rect x="940" y="1203" width="2" height="2" fill="#ffffff"/><rect x="946" y="1209" width="2" height="2" fill="#6e7f8f"/><rect x="944" y="1207" width="2" height="2" fill="#ffffff"/><rect x="942" y="1213" width="2" height="2" fill="#6e7f8f"/><rect x="940" y="1211" width="2" height="2" fill="#ffffff"/><rect x="946" y="1217" width="2" height="2" fill="#6e7f8f"/><rect x="944" y="1215" width="2" height="2" fill="#ffffff"/><rect x="942" y="1221" width="2" height="2" fill="#6e7f8f"/><rect x="940" y="1219" width="2" height="2" fill="#ffffff"/><rect x="946" y="1225" width="2" height="2" fill="#6e7f8f"/><rect x="944" y="1223" width="2" height="2" fill="#ffffff"/>
 <!-- right pane -->
 <rect x="952" y="221" width="1910" height="2" fill="#7a8a99"/>
 <rect x="952" y="221" width="2" height="1006" fill="#7a8a99"/>
 <!-- inner tab -->
 <polygon points="960,239 970,229 1352,229 1352,279 960,279" fill="#c8dcf0"/>
 <path d="M959,275 V239 L970,228 H1353 V275" fill="none" stroke="#6282c2" stroke-width="2" shape-rendering="auto"/>
 <rect x="970" y="229" width="382" height="2" fill="#ffffff"/>
 <rect x="960" y="240" width="2" height="35" fill="#ffffff"/>
 <!-- inner frame -->
 <rect x="954" y="275" width="8" height="2" fill="#6282c2"/>
 <rect x="1352" y="275" width="1508" height="2" fill="#6282c2"/>
 <rect x="956" y="277" width="6" height="2" fill="#ffffff"/>
 <rect x="1352" y="277" width="1508" height="2" fill="#ffffff"/>
 <rect x="956" y="279" width="1904" height="4" fill="#c8dcf0"/>
 <rect x="954" y="275" width="2" height="952" fill="#6282c2"/>
 <rect x="956" y="277" width="2" height="950" fill="#cce0f6"/>
 <rect x="2856" y="279" width="4" height="948" fill="#c8dcf0"/>
 <rect x="2860" y="275" width="2" height="952" fill="#7a8a99"/>
 <!-- code area -->
 <rect x="958" y="283" width="1868" height="2" fill="#7a8a99"/>
 <rect x="958" y="283" width="2" height="944" fill="#7a8a99"/>
 <rect x="960" y="285" width="1834" height="942" fill="#ffffff"/>
 <rect x="1032" y="285" width="2" height="942" fill="#d9d9d9"/>
 <rect x="1034" y="285" width="1760" height="30" fill="#e8f2fe"/>
 <!-- scrollbar -->
 <rect x="2794" y="283" width="2" height="944" fill="#7a8a99"/>
 <rect x="2796" y="285" width="28" height="942" fill="#eeeeee"/>
 <rect x="2796" y="285" width="2" height="30" fill="#ffffff"/>
 <rect x="2798" y="315" width="26" height="2" fill="#7a8a99"/>
 <rect x="2796" y="317" width="2" height="910" fill="#b8d0ea"/>
 <rect x="2796" y="317" width="28" height="2" fill="#b8d0ea"/>
 <rect x="2824" y="283" width="2" height="944" fill="#7a8a99"/>
 <rect x="2826" y="283" width="2" height="944" fill="#ffffff"/>
 <rect x="2828" y="283" width="28" height="944" fill="#eeeeee"/>
 <rect x="2828" y="283" width="28" height="4" fill="#94c4ff"/>
 <polygon points="2802,303 2818,303 2810,295" fill="#333333" shape-rendering="auto"/>
 <!-- red redaction -->
 <rect x="1620" y="641" width="214" height="36" rx="1.5" fill="#ff0000" shape-rendering="auto"/>
</svg>

<div class="a tree" style="left:73px;top:174px;letter-spacing:1.9px">playercounter-1.0-SNAPSHOT.jar</div>
<div class="a tree" style="left:1017px;top:235px;letter-spacing:2.11px">Playercounter.class</div>
<div class="a" style="left:134px;top:289px;width:298px;height:32px;background:#b8cfe6"></div>
<div class="a tree" style="left:102px;top:227px;letter-spacing:0.71px">META-INF</div>
<div class="a tree" style="left:102px;top:259px;letter-spacing:2.39px">htb.crafty.playercounter</div>
<div class="a tree" style="left:141px;top:291px;letter-spacing:2.11px">Playercounter.class</div>
<div class="a tree" style="left:102px;top:323px;letter-spacing:2.26px">net.kronos.rkon.core</div>
<div class="a tree" style="left:102px;top:355px;letter-spacing:1.89px">plugin.yml</div>

<svg class="a" style="left:0;top:0" width="2880" height="400" shape-rendering="crispEdges">
 <!-- coffee cup title icon -->
 <g>
  <rect x="38" y="21" width="2" height="2" fill="#707070"/><rect x="36" y="23" width="4" height="2" fill="#8a8a8a"/><rect x="32" y="25" width="6" height="3" fill="#7a7a7a"/>
  <rect x="26" y="29" width="20" height="2" fill="#9c7a40"/>
  <rect x="24" y="31" width="22" height="18" fill="#c49444"/>
  <rect x="26" y="31" width="18" height="16" fill="#fffde4"/>
  <rect x="28" y="31" width="6" height="4" fill="#f4a838"/><rect x="34" y="31" width="4" height="4" fill="#f07a30"/><rect x="38" y="31" width="4" height="4" fill="#e84a30"/>
  <rect x="42" y="31" width="2" height="16" fill="#f0d8a0"/>
  <rect x="46" y="33" width="4" height="2" fill="#a07838"/><rect x="46" y="35" width="4" height="3" fill="#fff4dc"/><rect x="50" y="35" width="2" height="6" fill="#9a7436"/><rect x="46" y="38" width="4" height="3" fill="#e4b460"/><rect x="46" y="41" width="2" height="2" fill="#9a7436"/>
  <rect x="26" y="47" width="18" height="2" fill="#d8aa58"/>
  <rect x="28" y="49" width="14" height="1" fill="#4a3a2a"/>
 </g>
 <!-- title buttons X -->
 <path d="M2842,29 L2854,41 M2854,29 L2842,41" stroke="#05070c" stroke-width="4.5" shape-rendering="auto"/>
 <!-- open folder -->
 <g transform="translate(20,119) scale(2)">
  <rect x="4" y="0" width="5" height="1" fill="#d8a458"/>
  <rect x="3" y="1" width="1" height="1" fill="#d8a458"/><rect x="4" y="1" width="5" height="1" fill="#ffffff"/><rect x="9" y="1" width="1" height="1" fill="#d8a458"/>
  <rect x="0" y="2" width="15" height="2" fill="#8a7484"/>
  <rect x="3" y="2" width="6" height="1" fill="#f2cc70"/>
  <rect x="1" y="3" width="1" height="8" fill="#4a5aa8"/>
  <rect x="13" y="3" width="1" height="3" fill="#4a5aa8"/>
  <rect x="2" y="3" width="11" height="3" fill="#fde3a0"/>
  <rect x="2" y="6" width="2" height="5" fill="#fcd070"/>
  <rect x="4" y="6" width="12" height="1" fill="#40509c"/>
  <polygon points="5,7 15,7 11,11 1,11" fill="#a8d8f8"/>
  <rect x="15" y="6" width="1" height="2" fill="#2a40a8"/>
  <rect x="4" y="7" width="1" height="1" fill="#2a40a8"/><rect x="3" y="8" width="1" height="1" fill="#2a40a8"/><rect x="2" y="9" width="1" height="1" fill="#2a40a8"/>
  <rect x="14" y="8" width="1" height="1" fill="#2a40a8"/><rect x="13" y="9" width="1" height="1" fill="#2a40a8"/><rect x="12" y="10" width="1" height="1" fill="#2a40a8"/>
  <rect x="2" y="11" width="10" height="1" fill="#1a38b0"/>
 </g>
 <!-- open folder with balls -->
 <g shape-rendering="auto">
  <rect x="86" y="125" width="12" height="19" fill="#fbe6b4"/>
  <rect x="84" y="127" width="2" height="17" fill="#b8701c"/>
  <rect x="86" y="125" width="2" height="2" fill="#b06010"/>
  <rect x="88" y="123" width="5" height="2" fill="#d08a30"/>
  <rect x="88" y="125" width="4" height="2" fill="#ffffff"/>
  <circle cx="99" cy="124" r="7" fill="#7a6ec0"/>
  <path d="M94,126 A6,6 0 0 0 104,130 L100,130 Z" fill="#5a4aa0"/>
  <rect x="96" y="119" width="6" height="2" fill="#a8a0d8"/>
  <circle cx="109" cy="127" r="6.5" fill="#42a050"/>
  <rect x="105" y="123" width="7" height="2" fill="#a8d098"/>
  <rect x="104" y="129" width="10" height="2" fill="#2e8040"/>
  <polygon points="95,133 116,133 116,136 107,145 86,145 86,142" fill="#fcd888" stroke="#b46818" stroke-width="2" stroke-linejoin="miter"/>
 </g>
 <!-- pen -->
 <g shape-rendering="auto">
  <polygon points="150,117 160,117 160,127 150,135 142,127" fill="#f8e0a0"/>
  <path d="M151,117.5 L142.5,126.5 M159.5,127 L150.5,134.5" stroke="#f0a020" stroke-width="2.2" fill="none"/>
  <path d="M152,118 H160 V125" stroke="#a88050" stroke-width="2" fill="none"/>
  <rect x="152" y="123" width="2" height="2" fill="#2050b0"/><rect x="150" y="125" width="2" height="2" fill="#2050b0"/>
  <polygon points="138,127 146,127 150,131 150,139 144,145 136,131" fill="#bab8c8"/>
  <path d="M138,128 H146 M149,131 V139 L144,144" stroke="#9c7c50" stroke-width="2" fill="none"/>
  <polygon points="136,131 144,145 128,145 128,139" fill="#fffce8"/>
  <path d="M128,145 V139 L136,131" stroke="#f4b030" stroke-width="2" fill="none"/>
  <rect x="129" y="140" width="3" height="4" fill="#f8e070"/>
 </g>
 <!-- arrows -->
 <polygon points="194,131 206,119 208,119 208,125 222,125 222,137 208,137 208,143 206,143" fill="#d6d6d6" stroke="#c6c6c6" stroke-width="2" shape-rendering="auto"/>
 <polygon points="266,131 254,119 252,119 252,125 238,125 238,137 252,137 252,143 254,143" fill="#d6d6d6" stroke="#c6c6c6" stroke-width="2" shape-rendering="auto"/>
 <!-- jar icon in tab -->
 <g>
  <rect x="38" y="177" width="24" height="24" rx="5" fill="#f2f6fe" shape-rendering="auto"/>
  <rect x="38" y="181" width="2" height="16" fill="#7c98cc"/>
  <rect x="60" y="181" width="2" height="16" fill="#7c98cc"/>
  <rect x="40" y="178" width="2" height="3" fill="#8aa4d4"/><rect x="58" y="178" width="2" height="3" fill="#8aa4d4"/>
  <rect x="40" y="197" width="2" height="3" fill="#8aa4d4"/><rect x="58" y="197" width="2" height="3" fill="#8aa4d4"/>
  <rect x="40" y="171" width="20" height="6" fill="#b88e12"/>
  <rect x="42" y="173" width="16" height="2" fill="#fff4c4"/>
  <rect x="42" y="195" width="16" height="3" fill="#fdf0c0"/>
  <rect x="42" y="199" width="16" height="2" fill="#7090c0"/>
  <g shape-rendering="auto">
   <rect x="43" y="186" width="4" height="6" rx="1.5" fill="none" stroke="#06184a" stroke-width="2"/>
   <rect x="50" y="185" width="2" height="8" fill="#06184a"/>
   <rect x="55" y="186" width="4" height="6" rx="1.5" fill="none" stroke="#06184a" stroke-width="2"/>
  </g>
 </g>
 <!-- close x icons -->
 <g id="cx1">
  <path d="M541,178 H546 L550,182 L554,178 H559 V183 L555,187 L559,191 V196 H554 L550,192 L546,196 H541 V191 L545,187 L541,183 Z" fill="#ffffff" stroke="#5e574a" stroke-width="2" shape-rendering="auto"/>
 </g>
 <path d="M1307,240 H1312 L1316,244 L1320,240 H1325 V245 L1321,249 L1325,253 V258 H1320 L1316,254 L1312,258 H1307 V253 L1311,249 L1307,245 Z" fill="#ffffff" stroke="#5e574a" stroke-width="2" shape-rendering="auto"/>
 <!-- tree lines -->
 <rect x="32" y="247" width="2" height="20" fill="#b4cce8"/>
 <rect x="32" y="287" width="2" height="47" fill="#b4cce8"/>
 <rect x="32" y="343" width="2" height="30" fill="#b4cce8"/>
 <rect x="32" y="371" width="20" height="2" fill="#b4cce8"/>
 <rect x="72" y="289" width="2" height="10" fill="#b4cce8"/>
 <!-- handles -->
 <g fill="#6480c4">
  <path d="M30,235 H38 V237 H40 V245 H38 V247 H30 V245 H28 V237 H30 Z M32,239 V243 H36 V239 Z" fill-rule="evenodd"/>
  <rect x="40" y="239" width="8" height="4"/>
  <path d="M30,267 H38 V269 H40 V277 H38 V279 H30 V277 H28 V269 H30 Z M32,271 V275 H36 V271 Z" fill-rule="evenodd"/>
  <rect x="32" y="279" width="4" height="8"/>
  <path d="M70,299 H78 V301 H80 V309 H78 V311 H70 V309 H68 V301 H70 Z M72,303 V307 H76 V303 Z" fill-rule="evenodd"/>
  <rect x="80" y="303" width="8" height="4"/>
  <path d="M30,331 H38 V333 H40 V341 H38 V343 H30 V341 H28 V333 H30 Z M32,335 V339 H36 V335 Z" fill-rule="evenodd"/>
  <rect x="40" y="335" width="8" height="4"/>
 </g>
 <rect x="48" y="241" width="4" height="2" fill="#b4cce8"/>
 <rect x="40" y="273" width="12" height="2" fill="#b4cce8"/>
 <rect x="88" y="305" width="4" height="2" fill="#b4cce8"/>
 <rect x="48" y="337" width="4" height="2" fill="#b4cce8"/>
 <!-- package icons -->
 <g id="pk1">
  <rect x="64" y="231" width="22" height="22" fill="#1e9c9c"/>
  <rect x="66" y="233" width="18" height="18" fill="#72d4d4"/>
  <rect x="68" y="235" width="5" height="5" fill="#8cdcdc"/><rect x="77" y="235" width="5" height="5" fill="#8cdcdc"/>
  <rect x="68" y="244" width="5" height="5" fill="#8cdcdc"/><rect x="77" y="244" width="5" height="5" fill="#8cdcdc"/>
  <rect x="74" y="229" width="2" height="26" fill="#1a7a7a"/>
  <rect x="62" y="241" width="26" height="2" fill="#1a7a7a"/>
  <rect x="74" y="229" width="2" height="2" fill="#0a3434"/><rect x="74" y="253" width="2" height="2" fill="#0a3434"/>
  <rect x="62" y="241" width="2" height="2" fill="#0a3434"/><rect x="86" y="241" width="2" height="2" fill="#0a3434"/>
 </g>
 <g id="pk2">
  <rect x="64" y="263" width="22" height="22" fill="#c06a18"/>
  <rect x="66" y="265" width="18" height="18" fill="#eed2a4"/>
  <rect x="69" y="267" width="3" height="3" fill="#fff8c8"/><rect x="78" y="267" width="3" height="3" fill="#fff8c8"/>
  <rect x="69" y="276" width="3" height="3" fill="#fff8c8"/><rect x="78" y="276" width="3" height="3" fill="#fff8c8"/>
  <rect x="74" y="261" width="2" height="26" fill="#96624a"/>
  <rect x="62" y="273" width="26" height="2" fill="#96624a"/>
  <rect x="74" y="261" width="2" height="2" fill="#4a1a04"/><rect x="74" y="285" width="2" height="2" fill="#4a1a04"/>
  <rect x="62" y="273" width="2" height="2" fill="#4a1a04"/><rect x="86" y="273" width="2" height="2" fill="#4a1a04"/>
 </g>
 <g transform="translate(0,64)">
  <rect x="64" y="263" width="22" height="22" fill="#c06a18"/>
  <rect x="66" y="265" width="18" height="18" fill="#eed2a4"/>
  <rect x="69" y="267" width="3" height="3" fill="#fff8c8"/><rect x="78" y="267" width="3" height="3" fill="#fff8c8"/>
  <rect x="69" y="276" width="3" height="3" fill="#fff8c8"/><rect x="78" y="276" width="3" height="3" fill="#fff8c8"/>
  <rect x="74" y="261" width="2" height="26" fill="#96624a"/>
  <rect x="62" y="273" width="26" height="2" fill="#96624a"/>
  <rect x="74" y="261" width="2" height="2" fill="#4a1a04"/><rect x="74" y="285" width="2" height="2" fill="#4a1a04"/>
  <rect x="62" y="273" width="2" height="2" fill="#4a1a04"/><rect x="86" y="273" width="2" height="2" fill="#4a1a04"/>
 </g>
 <!-- yml doc icon -->
 <g>
  <path d="M65,356 H80 L86,362 V382 H65 Z" fill="#eef4ff" stroke="#9a7a28" stroke-width="2" shape-rendering="auto"/>
  <polygon points="79,356 86,363 79,363" fill="#e8c880"/>
  <rect x="68" y="361" width="8" height="2" fill="#5070b0"/>
  <rect x="68" y="365" width="14" height="2" fill="#5070b0"/>
  <rect x="68" y="369" width="14" height="2" fill="#5070b0"/>
  <rect x="68" y="373" width="14" height="2" fill="#5070b0"/>
  <rect x="68" y="377" width="10" height="2" fill="#5070b0"/>
 </g>
</svg>
<svg class="a" style="left:0;top:0" width="2880" height="400" shape-rendering="crispEdges"><defs><linearGradient id="docg" x1="0" y1="0" x2="0" y2="1"><stop offset="0" stop-color="#d09a20"/><stop offset="1" stop-color="#706430"/></linearGradient></defs>
<g transform="translate(0,0)">
  <path d="M105,306 V320 H125 V300 L119,294 H110" fill="#f2f6ff" stroke="url(#docg)" stroke-width="2" shape-rendering="auto"/>
  <polygon points="118,294 125,301 118,301" fill="#e8c070"/>
  <rect x="107" y="291" width="3" height="12" fill="#2a6aa8"/>
  <rect x="102" y="301" width="6" height="4" fill="#3a7ab0"/>
  <rect x="109" y="308" width="4" height="8" rx="1.5" fill="#e8ecf6" stroke="#0a1e50" stroke-width="2" shape-rendering="auto"/>
  <rect x="118" y="307" width="2" height="10" fill="#0a1e50"/>
  <rect x="125" y="308" width="4" height="8" rx="1.5" fill="#e8ecf6" stroke="#0a1e50" stroke-width="2" shape-rendering="auto"/>
</g>

<g transform="translate(880,-56)">
  <path d="M105,306 V320 H125 V300 L119,294 H110" fill="#f2f6ff" stroke="url(#docg)" stroke-width="2" shape-rendering="auto"/>
  <polygon points="118,294 125,301 118,301" fill="#e8c070"/>
  <rect x="107" y="291" width="3" height="12" fill="#2a6aa8"/>
  <rect x="102" y="301" width="6" height="4" fill="#3a7ab0"/>
  <rect x="109" y="308" width="4" height="8" rx="1.5" fill="#e8ecf6" stroke="#0a1e50" stroke-width="2" shape-rendering="auto"/>
  <rect x="118" y="307" width="2" height="10" fill="#0a1e50"/>
  <rect x="125" y="308" width="4" height="8" rx="1.5" fill="#e8ecf6" stroke="#0a1e50" stroke-width="2" shape-rendering="auto"/>
</g>
</svg>
<div id="codewrap">
<div class="a code" style="left:1034px;top:287px"><span class="k">package</span> htb.crafty.playercounter;</div>
<div class="a code" style="left:1034px;top:317px"></div>
<div class="a code" style="left:1034px;top:347px"><span class="k">import</span> java.io.IOException;</div>
<div class="a code" style="left:1034px;top:377px"><span class="k">import</span> java.io.PrintWriter;</div>
<div class="a code" style="left:1034px;top:407px"><span class="k">import</span> <span class="u">net.kronos.rkon.core.Rcon</span>;</div>
<div class="a code" style="left:1034px;top:437px"><span class="k">import</span> <span class="u">net.kronos.rkon.core.ex.AuthenticationException</span>;</div>
<div class="a code" style="left:1034px;top:467px"><span class="k">import</span> org.bukkit.plugin.java.JavaPlugin;</div>
<div class="a code" style="left:1034px;top:497px"></div>
<div class="a code" style="left:1034px;top:527px"><span class="k">public final class</span> Playercounter <span class="k">extends</span> JavaPlugin {</div>
<div class="a code" style="left:1034px;top:557px">  <span class="k">public void</span> onEnable() {</div>
<div class="a code" style="left:1034px;top:587px">    <span class="u">Rcon</span> rcon = <span class="k">null</span>;</div>
<div class="a ln" style="left:960px;width:50px;top:587px">13</div>
<div class="a code" style="left:1034px;top:617px">    <span class="k">try</span> {</div>
<div class="a code" style="left:1034px;top:647px">      rcon = <span class="k">new</span> <span class="u">Rcon</span>(<span class="s">&quot;127.0.0.1&quot;</span>, 27015,                .getBytes());</div>
<div class="a ln" style="left:960px;width:50px;top:647px">15</div>
<div class="a code" style="left:1034px;top:677px">    } <span class="k">catch</span> (IOException e) {</div>
<div class="a ln" style="left:960px;width:50px;top:677px">17</div>
<div class="a code" style="left:1034px;top:707px">      <span class="k">throw new</span> RuntimeException(e);</div>
<div class="a ln" style="left:960px;width:50px;top:707px">18</div>
<div class="a code" style="left:1034px;top:737px">    } <span class="k">catch</span> (<span class="u">AuthenticationException</span> e2) {</div>
<div class="a ln" style="left:960px;width:50px;top:737px">20</div>
<div class="a code" style="left:1034px;top:767px">      <span class="k">throw new</span> RuntimeException(e2);</div>
<div class="a ln" style="left:960px;width:50px;top:767px">21</div>
<div class="a code" style="left:1034px;top:797px">    }</div>
<div class="a code" style="left:1034px;top:827px">    String result = <span class="k">null</span>;</div>
<div class="a ln" style="left:960px;width:50px;top:827px">23</div>
<div class="a code" style="left:1034px;top:857px">    <span class="k">try</span> {</div>
<div class="a code" style="left:1034px;top:887px">      result = rcon.<span class="u">command</span>(<span class="s">&quot;players online count&quot;</span>);</div>
<div class="a ln" style="left:960px;width:50px;top:887px">25</div>
<div class="a code" style="left:1034px;top:917px">      PrintWriter writer = <span class="k">new</span> PrintWriter(<span class="s">&quot;C:\\inetpub\\wwwroot\\playercount.txt&quot;</span>, <span class="s">&quot;UTF-8&quot;</span>);</div>
<div class="a ln" style="left:960px;width:50px;top:917px">26</div>
<div class="a code" style="left:1034px;top:947px">      writer.println(result);</div>
<div class="a ln" style="left:960px;width:50px;top:947px">27</div>
<div class="a code" style="left:1034px;top:977px">    } <span class="k">catch</span> (IOException e3) {</div>
<div class="a ln" style="left:960px;width:50px;top:977px">29</div>
<div class="a code" style="left:1034px;top:1007px">      <span class="k">throw new</span> RuntimeException(e3);</div>
<div class="a ln" style="left:960px;width:50px;top:1007px">30</div>
<div class="a code" style="left:1034px;top:1037px">    }</div>
<div class="a code" style="left:1034px;top:1067px">  }</div>
<div class="a code" style="left:1034px;top:1097px"></div>
<div class="a code" style="left:1034px;top:1127px">  <span class="k">public void</span> onDisable() {}</div>
<div class="a code" style="left:1034px;top:1157px">}</div>
<div class="a fold" style="left:1012px;top:351px"></div>
<div class="a fold" style="left:1012px;top:531px"></div>
<div class="a fold" style="left:1012px;top:561px"></div>
<div class="a fold" style="left:1012px;top:621px"></div>
<div class="a fold" style="left:1012px;top:861px"></div>
</div>
</body></html>
